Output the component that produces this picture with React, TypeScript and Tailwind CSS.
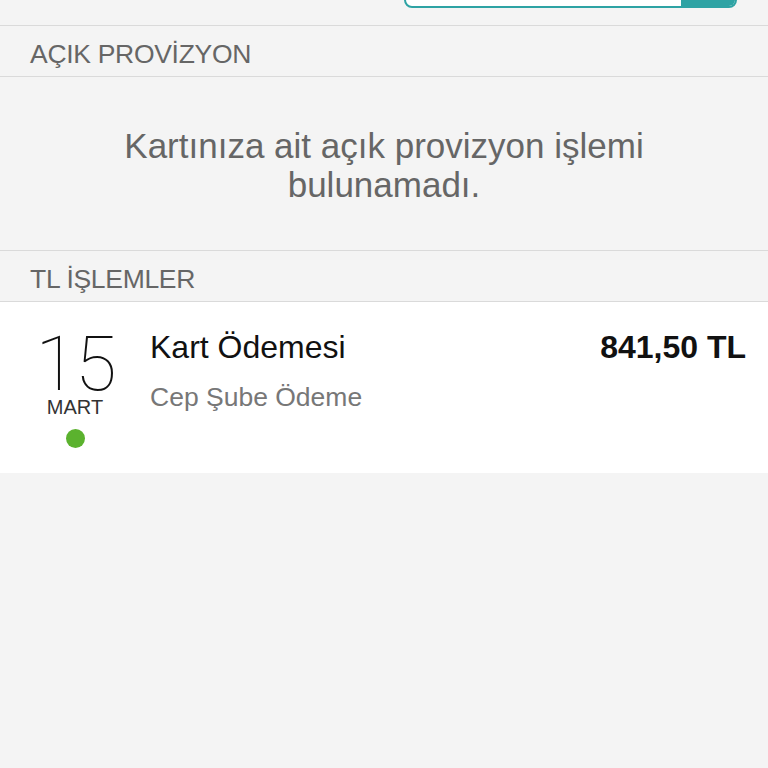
const SANS = "font-['Liberation_Sans','Helvetica_Neue',Arial,sans-serif]"

function SectionHeader({ title }: { title: string }) {
  return (
    <div className="h-[51px] flex items-center px-[30px] pt-[8px] border-b border-[#dadada]">
      <span className={`${SANS} text-[26.5px] text-[#666] tracking-[-0.3px]`}>{title}</span>
    </div>
  )
}

function SearchBar() {
  return (
    <div className="h-[26px] overflow-hidden flex items-end pb-[17px] border-b border-[#dadada]">
      <div className="ml-[404px] w-[333px] h-[44px] shrink-0 flex border-2 border-[#2ea3a4] rounded-[8px] bg-white overflow-hidden">
        <div className="flex-1" />
        <div className="w-[54px] bg-[#2ea3a4]" />
      </div>
    </div>
  )
}

function TransactionRow() {
  return (
    <div className="bg-white h-[171px] flex">
      <div className="w-[150px] shrink-0 flex flex-col items-center pt-[30px]">
        <span className="font-['Roboto',sans-serif] font-thin text-[76px] leading-[64px] text-[#111] tracking-[-2px]">15</span>
        <span className={`${SANS} text-[20px] leading-[22px] text-[#333]`}>MART</span>
        <span className="w-[19px] h-[19px] rounded-full bg-[#5bb22e] mt-[11px]" />
      </div>
      <div className="flex-1 flex justify-between pr-[22px] pt-[27px]">
        <div className="flex flex-col">
          <span className={`${SANS} text-[32px] leading-[36px] text-[#111]`}>Kart Ödemesi</span>
          <span className={`${SANS} text-[26.5px] leading-[30px] text-[#777] mt-[17px]`}>Cep Şube Ödeme</span>
        </div>
        <span className={`${SANS} font-bold text-[32px] leading-[36px] text-[#111]`}>841,50 TL</span>
      </div>
    </div>
  )
}

export default function App() {
  return (
    <div className="w-[768px] h-[768px] bg-[#f4f4f4] overflow-hidden">
      <SearchBar />
      <SectionHeader title="AÇIK PROVİZYON" />
      <div className="h-[174px] flex items-center justify-center border-b border-[#dadada]">
        <p className={`${SANS} text-[35px] leading-[39px] text-[#666] text-center w-[580px] mt-[2px]`}>
          Kartınıza ait açık provizyon işlemi bulunamadı.
        </p>
      </div>
      <SectionHeader title="TL İŞLEMLER" />
      <TransactionRow />
    </div>
  )
}
